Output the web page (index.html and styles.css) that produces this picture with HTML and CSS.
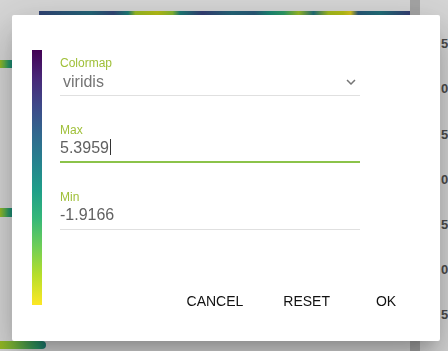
FILE: index.html
```html
<!DOCTYPE html>
<html lang="en">
<head>
  <meta charset="UTF-8" />
  <title>Colormap settings</title>
  <link rel="stylesheet" href="styles.css">
</head>
<body>

<div class="plot">
  <div class="plot-strip"></div>
  <div class="plot-panel"></div>
  <div class="plot-axis">
    <span class="tick" style="top: 36px">5</span>
    <span class="tick" style="top: 81px">0</span>
    <span class="tick" style="top: 127px">5</span>
    <span class="tick" style="top: 172px">0</span>
    <span class="tick" style="top: 217px">5</span>
    <span class="tick" style="top: 262px">0</span>
    <span class="tick" style="top: 307px">5</span>
  </div>
  <div class="plot-mark mark-a"></div>
  <div class="plot-mark mark-b"></div>
  <div class="plot-mark mark-c"></div>
</div>

<div class="overlay"></div>

<div class="dialog">
  <div class="colorbar"></div>

  <div class="fields">
    <div class="field">
      <label class="field-label">Colormap</label>
      <div class="field-input select">
        <span class="select-value">viridis</span>
        <svg class="select-icon" viewBox="0 0 24 24" width="18" height="18">
          <path d="M16.59 8.59L12 13.17 7.41 8.59 6 10l6 6 6-6z" fill="#757575"/>
        </svg>
      </div>
    </div>
    <div class="field">
      <label class="field-label">Max</label>
      <div class="field-input focused">5.3959<span class="caret"></span></div>
    </div>
    <div class="field">
      <label class="field-label">Min</label>
      <div class="field-input">-1.9166</div>
    </div>
  </div>

  <div class="actions">
    <button class="btn">CANCEL</button>
    <button class="btn">RESET</button>
    <button class="btn">OK</button>
  </div>
</div>

</body>
</html>
```

FILE: styles.css
```css
html, body {
  margin: 0;
  width: 448px;
  height: 351px;
  overflow: hidden;
}
body {
  font-family: "Liberation Sans", Arial, sans-serif;
  background: #ffffff;
  color: #212121;
}

/* the chart that sits under the dialog */
.plot {
  position: relative;
  width: 448px;
  height: 351px;
}
.plot-strip {
  position: absolute;
  left: 39px;
  top: 11px;
  width: 371px;
  height: 4px;
  background: linear-gradient(90deg, #3b528b 0%, #31688e 8%, #2a788e 14%, #3b528b 20%, #21918c 24%, #b5de2b 26%, #d8e219 32%, #9fda3a 36%, #21918c 38%, #3e4989 44%, #2a788e 52%, #31688e 58%, #1f9e89 62%, #35b779 66%, #b5de2b 70%, #26828e 74%, #c2df23 78%, #d8e219 82%, #fde725 84%, #31688e 86%, #26828e 92%, #3e4989 100%);
}
.plot-panel {
  position: absolute;
  left: 410px;
  top: 0;
  width: 10px;
  height: 351px;
  background: #c4c4c4;
}
.plot-axis {
  position: absolute;
  left: 440px;
  top: 0;
  width: 8px;
  height: 351px;
}
.tick {
  position: absolute;
  left: 1px;
  font-size: 13px;
  font-weight: bold;
  color: #5a5a5a;
}
.plot-mark {
  position: absolute;
  left: 0;
  background: linear-gradient(90deg, #b5de2b, #6ece58 40%, #35b779 70%, #1f9e89);
}
.mark-a { top: 60px; width: 12px; height: 8px; }
.mark-b { top: 208px; width: 12px; height: 9px; }
.mark-c {
  top: 341px;
  width: 46px;
  height: 8px;
  border-radius: 0 4px 4px 0;
  background: linear-gradient(90deg, #b5de2b, #8fd744 30%, #6ece58 50%, #35b779 80%, #21918c);
}

.overlay {
  position: fixed;
  inset: 0;
  background: rgba(0, 0, 0, 0.16);
}

/* dialog */
.dialog {
  position: fixed;
  left: 12px;
  top: 15px;
  width: 428px;
  height: 326px;
  box-sizing: border-box;
  padding: 35px 22px 22px 20px;
  background: #ffffff;
  border-radius: 2px;
  box-shadow: 0 11px 15px -7px rgba(0, 0, 0, 0.2), 0 24px 38px 3px rgba(0, 0, 0, 0.14), 0 9px 46px 8px rgba(0, 0, 0, 0.12);
  display: grid;
  grid-template-columns: 10px 1fr;
  grid-template-rows: 1fr auto;
  column-gap: 18px;
}
.colorbar {
  grid-row: 1 / 3;
  width: 10px;
  height: 255px;
  background: linear-gradient(180deg, #440154 0%, #482878 11%, #3e4989 22%, #31688e 33%, #26828e 44%, #1f9e89 55%, #35b779 66%, #6ece58 77%, #b5de2b 88%, #fde725 100%);
}
.fields {
  width: 300px;
  padding-top: 6px;
  display: flex;
  flex-direction: column;
  gap: 27px;
}
.field {
  display: flex;
  flex-direction: column;
}
.field-label {
  font-size: 12px;
  line-height: 14px;
  color: #a0c03a;
  margin-bottom: 2px;
}
.field-input {
  font-size: 16px;
  line-height: 18px;
  color: #616161;
  padding-bottom: 5px;
  border-bottom: 1px solid #e0e0e0;
}
.field-input.focused {
  padding-bottom: 4px;
  border-bottom: 2px solid #8bc34a;
}
.caret {
  display: inline-block;
  width: 1px;
  height: 16px;
  margin-left: 1px;
  vertical-align: -2px;
  background: #333;
}
.select {
  display: flex;
  align-items: center;
  justify-content: space-between;
  margin-top: 1px;
  padding-bottom: 4px;
}
.select-value {
  padding-left: 3px;
  color: #757575;
}
.select-icon {
  display: block;
}

.actions {
  grid-column: 2;
  display: flex;
  justify-content: flex-end;
  gap: 8px;
}
.btn {
  min-width: 64px;
  height: 36px;
  padding: 0 16px;
  border: none;
  background: transparent;
  font-family: inherit;
  font-size: 14px;
  color: #111;
  cursor: pointer;
}
```
